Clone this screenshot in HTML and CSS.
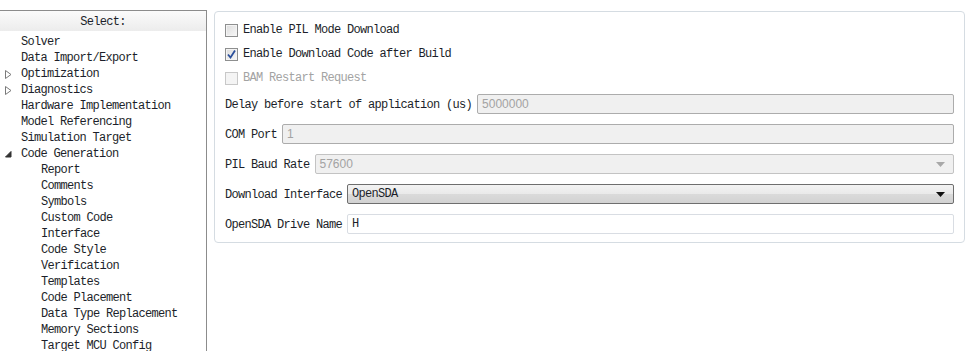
FILE: index.html
```html
<!DOCTYPE html>
<html>
<head>
    <title>Configuration Parameters - Target MCU Config</title>
    <link rel="stylesheet" href="styles.css">
</head>
<body>
    <div class="layout">
        <aside class="tree">
            <div class="tree-header">Select:</div>
            <ul class="tree-list">
                <li class="item">Solver</li>
                <li class="item">Data Import/Export</li>
                <li class="item">
                    <svg class="twisty" width="7" height="9" viewBox="0 0 7 9"><path d="M0.5 0.5 L6 4.5 L0.5 8.5 Z" fill="#fff" stroke="#7a7a7a"/></svg>
                    Optimization
                </li>
                <li class="item">
                    <svg class="twisty" width="7" height="9" viewBox="0 0 7 9"><path d="M0.5 0.5 L6 4.5 L0.5 8.5 Z" fill="#fff" stroke="#7a7a7a"/></svg>
                    Diagnostics
                </li>
                <li class="item">Hardware Implementation</li>
                <li class="item">Model Referencing</li>
                <li class="item">Simulation Target</li>
                <li class="item">
                    <svg class="twisty open" width="7" height="7" viewBox="0 0 7 7"><path d="M6 0.5 L6 6 L0.5 6 Z" fill="#333" stroke="#333"/></svg>
                    Code Generation
                </li>
                <li class="item sub">Report</li>
                <li class="item sub">Comments</li>
                <li class="item sub">Symbols</li>
                <li class="item sub">Custom Code</li>
                <li class="item sub">Interface</li>
                <li class="item sub">Code Style</li>
                <li class="item sub">Verification</li>
                <li class="item sub">Templates</li>
                <li class="item sub">Code Placement</li>
                <li class="item sub">Data Type Replacement</li>
                <li class="item sub">Memory Sections</li>
                <li class="item sub">Target MCU Config</li>
            </ul>
        </aside>

        <main class="content">
            <section class="panel">
                <label class="check-row">
                    <span class="box"></span>
                    Enable PIL Mode Download
                </label>
                <label class="check-row">
                    <span class="box">
                        <svg width="11" height="11" viewBox="0 0 11 11"><path d="M2 5.5 L4.5 8.5 L9 1.5" fill="none" stroke="#2b4f9b" stroke-width="1.8"/></svg>
                    </span>
                    Enable Download Code after Build
                </label>
                <label class="check-row disabled">
                    <span class="box"></span>
                    BAM Restart Request
                </label>

                <div class="field-row">
                    <span class="field-label">Delay before start of application (us)</span>
                    <div class="field disabled">5000000</div>
                </div>
                <div class="field-row">
                    <span class="field-label">COM Port</span>
                    <div class="field disabled">1</div>
                </div>
                <div class="field-row">
                    <span class="field-label">PIL Baud Rate</span>
                    <div class="field select disabled">
                        57600
                        <svg class="caret" width="9" height="5" viewBox="0 0 9 5"><path d="M0 0 L9 0 L4.5 5 Z" fill="#a8a8a8"/></svg>
                    </div>
                </div>
                <div class="field-row">
                    <span class="field-label">Download Interface</span>
                    <div class="field select active">
                        OpenSDA
                        <svg class="caret" width="9" height="5" viewBox="0 0 9 5"><path d="M0 0 L9 0 L4.5 5 Z" fill="#111"/></svg>
                    </div>
                </div>
                <div class="field-row">
                    <span class="field-label">OpenSDA Drive Name</span>
                    <div class="field text">H</div>
                </div>
            </section>
        </main>
    </div>
</body>
</html>
```

FILE: styles.css
```css
:root {
    --text-color: #1c1f2a;
    --muted-color: #a3a3a3;
    --tree-border: #8c8c8c;
    --panel-border: #d5dce2;
    --field-border: #acacac;
    --field-disabled: #f0f0f0;
}

* {
    margin: 0;
    padding: 0;
    box-sizing: border-box;
}

body {
    font-family: 'Liberation Mono', monospace;
    font-size: 12px;
    letter-spacing: -0.7px;
    color: var(--text-color);
    background: #fff;
    height: 351px;
    overflow: hidden;
}

.layout {
    display: flex;
    align-items: flex-start;
    gap: 7px;
}

/* left tree */
.tree {
    width: 207px;
    flex-shrink: 0;
    margin-top: 10px;
    height: 341px;
    border-top: 1px solid var(--tree-border);
    border-right: 1px solid var(--tree-border);
}

.tree-header {
    height: 20px;
    line-height: 22px;
    text-align: center;
    background: linear-gradient(#fbfbfb, #ececec);
}

.tree-list {
    list-style: none;
    padding-top: 3px;
}

.item {
    position: relative;
    height: 16px;
    line-height: 16px;
    padding-left: 21px;
    white-space: nowrap;
}

.item.sub {
    padding-left: 41px;
}

.twisty {
    position: absolute;
    left: 5px;
    top: 4px;
}

.twisty.open {
    left: 5px;
    top: 5px;
}

/* right panel */
.content {
    flex: 1;
    padding-top: 11px;
    padding-right: 7px;
}

.panel {
    border: 1px solid var(--panel-border);
    border-radius: 4px;
    padding: 6px 10px 3px 10px;
}

.check-row {
    display: flex;
    align-items: center;
    gap: 5px;
    height: 24px;
}

.box {
    width: 13px;
    height: 13px;
    border: 1px solid #8e8f8f;
    background: linear-gradient(135deg, #dcdcdc, #f8f8f8);
    box-shadow: inset 0 0 0 1px #f4f4f4;
    display: flex;
    align-items: center;
    justify-content: center;
}

.check-row.disabled {
    color: var(--muted-color);
}

.check-row.disabled .box {
    border-color: #c8c8c8;
    background: #f4f4f4;
}

.field-row {
    display: flex;
    align-items: center;
    gap: 5px;
    height: 30px;
}

.check-row + .field-row {
    margin-top: -1px;
}

.field-label {
    white-space: nowrap;
    padding-top: 1px;
}

.field {
    flex: 1;
    height: 20px;
    line-height: 18px;
    border: 1px solid var(--field-border);
    border-radius: 2px;
    padding: 0 4px;
    position: relative;
}

.field.disabled {
    background: var(--field-disabled);
    color: var(--muted-color);
    font-family: 'Liberation Sans', sans-serif;
    letter-spacing: 0;
}

.field.select.disabled {
    border-color: #c3c3c3;
}

.field.select.active {
    background: linear-gradient(#f3f3f3, #e9e9e9 50%, #dadada 51%, #d2d2d2);
    border-color: #6e6e6e;
}

.field.text {
    background: #fff;
    border-color: #d9dde3;
}

.caret {
    position: absolute;
    right: 8px;
    top: 7px;
}
```
